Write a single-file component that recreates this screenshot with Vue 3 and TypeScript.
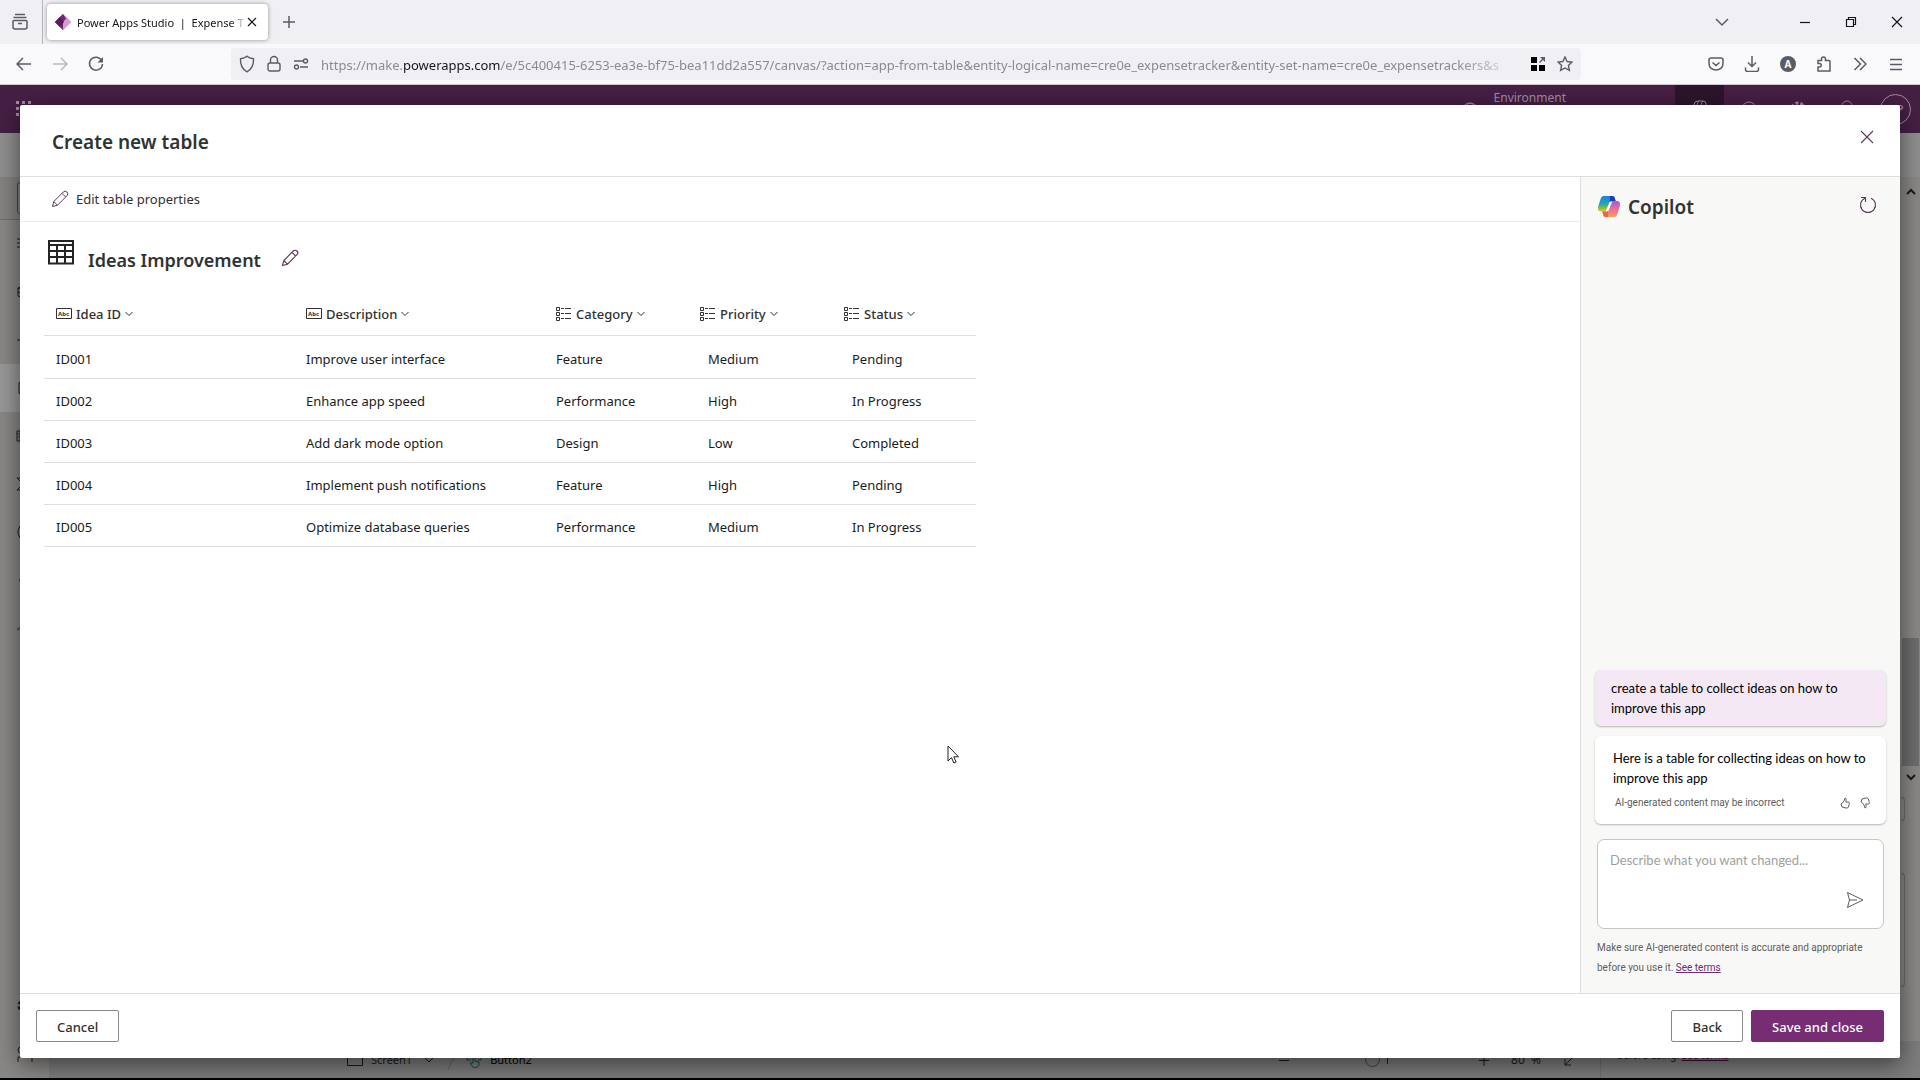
<script setup lang="ts">
import { ref } from 'vue'

interface Column { key: string; label: string; kind: 'text' | 'choice' }
interface Idea { id: string; description: string; category: string; priority: string; status: string }

const columns: Column[] = [
  { key: 'id', label: 'Idea ID', kind: 'text' },
  { key: 'description', label: 'Description', kind: 'text' },
  { key: 'category', label: 'Category', kind: 'choice' },
  { key: 'priority', label: 'Priority', kind: 'choice' },
  { key: 'status', label: 'Status', kind: 'choice' },
]

const ideas: Idea[] = [
  { id: 'ID001', description: 'Improve user interface', category: 'Feature', priority: 'Medium', status: 'Pending' },
  { id: 'ID002', description: 'Enhance app speed', category: 'Performance', priority: 'High', status: 'In Progress' },
  { id: 'ID003', description: 'Add dark mode option', category: 'Design', priority: 'Low', status: 'Completed' },
  { id: 'ID004', description: 'Implement push notifications', category: 'Feature', priority: 'High', status: 'Pending' },
  { id: 'ID005', description: 'Optimize database queries', category: 'Performance', priority: 'Medium', status: 'In Progress' },
]

const railIcons: string[] = [
  'M1 4h16M1 8h16M1 12h16',
  'M9 2l7 3-7 3-7-3zM2 9l7 3 7-3M2 13l7 3 7-3M2 5v8',
  'M9 2v14M1 9h16',
  'M3 4c0-3 12-3 12 0v10c0 3-12 3-12 0z',
  'M1 4h16v10H1zM4 4v10M8 7h5M8 11h5M2 7h1M2 10h1',
  'M15 3H1l6 6-6 6h14',
  'M5 2c-4 5-4 9 0 14M13 2c4 5 4 9 0 14M6 6l6 6M12 6l-6 6',
  'M4 8v3',
  'M1 11l6-5 8 6',
]

const prompt = ref('')
</script>

<template>
  <div class="window">
    <header class="tabs">
      <button class="icon-btn recent" aria-label="Recent browsing">
        <svg width="18" height="18" viewBox="0 0 18 18"><path d="M4 1.500h10M2.500 4.500h13M3 7.500h12a1 1 0 0 1 1 1V14a2 2 0 0 1-2 2H4a2 2 0 0 1-2-2V8.500a1 1 0 0 1 1-1zM7 10.500h4" /></svg>
      </button>
      <div class="tab">
        <svg class="logo" width="16" height="16" viewBox="0 0 16 16"><path d="M8 0l8 8-8 8-8-8z" fill="#b96bb4" /><path d="M8 0l3 5-3 3 3 3-3 5-8-8z" fill="#742774" /><path d="M8 0l4 4-4 4V16l8-8z" fill="#d59bd2" /><path d="M5 3l4 5-4 5-5-5z" fill="#5c1d5e" /></svg>
        <span class="tab-title">Power Apps Studio&nbsp; |&nbsp; Expense T</span>
        <button class="icon-btn dark" aria-label="Close tab"><svg width="10" height="10" viewBox="0 0 10 10"><path d="M1 1l8 8M9 1L1 9" /></svg></button>
      </div>
      <button class="icon-btn new-tab" aria-label="New tab"><svg width="14" height="14" viewBox="0 0 14 14"><path d="M7 1v12M1 7h12" /></svg></button>
      <div class="window-controls">
        <button class="icon-btn" aria-label="List tabs"><svg width="14" height="14" viewBox="0 0 14 14"><path d="M1 4l6 6 6-6" /></svg></button>
        <button class="icon-btn dark minimize" aria-label="Minimize"><svg width="12" height="12" viewBox="0 0 12 12"><path d="M1 6.500h10" /></svg></button>
        <button class="icon-btn dark" aria-label="Restore"><svg width="12" height="12" viewBox="0 0 12 12"><path d="M1.500 3.500h7v7h-7zM3.500 3.500v-2h7v7h-2" /></svg></button>
        <button class="icon-btn dark" aria-label="Close"><svg width="12" height="12" viewBox="0 0 12 12"><path d="M1 1l10 10M11 1L1 11" /></svg></button>
      </div>
    </header>

    <nav class="toolbar">
      <div class="nav-buttons">
        <button class="icon-btn" aria-label="Back"><svg width="16" height="16" viewBox="0 0 16 16"><path d="M15 8H1.500M7 2L1 8l6 6" /></svg></button>
        <button class="icon-btn faded" aria-label="Forward"><svg width="16" height="16" viewBox="0 0 16 16"><path d="M1 8h13.500M9 2l6 6-6 6" /></svg></button>
        <button class="icon-btn" aria-label="Reload"><svg width="16" height="16" viewBox="0 0 16 16"><path d="M13.700 4.500A6.500 6.500 0 1 0 14.500 8" /><path d="M15 1v5.500H9.500z" fill="currentColor" stroke="none" /></svg></button>
      </div>
      <div class="address">
        <svg width="16" height="18" viewBox="0 0 16 18"><path d="M8 1.200C6 3 4 3.500 1.500 3.700 1.200 9 3 14 8 16.800c5-2.800 6.800-7.800 6.500-13.100C12 3.500 10 3 8 1.200z" /></svg>
        <svg width="14" height="18" viewBox="0 0 14 18"><path d="M3 8h8a2 2 0 0 1 2 2v4a2 2 0 0 1-2 2H3a2 2 0 0 1-2-2v-4a2 2 0 0 1 2-2zM3.500 8V5a3.500 3.500 0 0 1 7 0v3" /></svg>
        <svg width="16" height="14" viewBox="0 0 16 14"><path d="M1 4h9M7 10h8" /><circle cx="12.500" cy="4" r="2" /><circle cx="3.500" cy="10" r="2" /></svg>
        <p class="url">https://make.<b>powerapps.com</b>/e/5c400415-6253-ea3e-bf75-bea11dd2a557/canvas/?action=app-from-table&amp;entity-logical-name=cre0e_expensetracker&amp;entity-set-name=cre0e_expensetrackers&amp;s</p>
        <svg class="solid" width="14" height="14" viewBox="0 0 14 14"><path d="M0 0h6v6H0zM0 8h6v6H0zM8 8h6v6H8z" /><path d="M9 0h5v5l-2-2-3 3-1-1 3-3z" fill="#5b5b66" /></svg>
        <svg width="16" height="16" viewBox="0 0 16 16"><path d="M8 1l2.100 4.500 4.900.6-3.600 3.400 1 4.900L8 12l-4.400 2.400 1-4.900L1 6.100l4.900-.6z" /></svg>
      </div>
      <div class="extensions">
        <button class="icon-btn" aria-label="Pocket"><svg width="16" height="16" viewBox="0 0 16 16"><path d="M3 2h10a2 2 0 0 1 2 2v3.500c0 8.700-14 8.700-14 0V4a2 2 0 0 1 2-2zM4.500 6.500L8 9.500l3.500-3" /></svg></button>
        <button class="icon-btn" aria-label="Downloads"><svg width="16" height="16" viewBox="0 0 16 16"><path d="M8 0v10.500M4 6.500l4 4 4-4M1.500 11.500v2a2 2 0 0 0 2 2h9a2 2 0 0 0 2-2v-2" /></svg></button>
        <button class="account" aria-label="Account">A</button>
        <button class="icon-btn" aria-label="Extensions"><svg width="16" height="16" viewBox="0 0 16 16"><path d="M2 4.500h3.500V3a2 2 0 0 1 4 0v1.500H13a1 1 0 0 1 1 1V15H2v-4h1.500a1.500 1.500 0 0 0 0-3.500H2z" /></svg></button>
        <button class="icon-btn" aria-label="More tools"><svg width="14" height="14" viewBox="0 0 14 14"><path d="M1.500 1l6 6-6 6M7 1l6 6-6 6" /></svg></button>
        <button class="icon-btn" aria-label="Menu"><svg width="14" height="14" viewBox="0 0 14 14"><path d="M1 2.500h12M1 7.500h12M1 12.500h12" /></svg></button>
      </div>
    </nav>

    <div class="studio">
      <div class="suite">
        <svg class="waffle" width="16" height="16" viewBox="0 0 16 16"><path d="M0 0h3v3H0zM6 0h3v3H6zM12 0h3v3h-3zM0 6h3v3H0zM6 6h3v3H6zM12 6h3v3h-3zM0 12h3v3H0zM6 12h3v3H6zM12 12h3v3h-3z" /></svg>
        <div class="environment">
          <svg width="18" height="18" viewBox="0 0 18 18"><circle cx="9" cy="9" r="8" /><ellipse cx="9" cy="9" rx="4" ry="8" /></svg>
          <span>Environment</span>
        </div>
        <div class="suite-cell active"><svg width="18" height="18" viewBox="0 0 18 18"><path d="M3 14V5a4 4 0 0 1 4-4h5a3 3 0 0 1 3 3v10M8 1C6 3 6 6 6 9M12 1c-2 2-2 5-2 8" /></svg></div>
        <div class="suite-cell"><svg width="18" height="18" viewBox="0 0 18 18"><circle cx="9" cy="9" r="7" /></svg></div>
        <div class="suite-cell"><svg width="18" height="18" viewBox="0 0 18 18"><circle cx="9" cy="9" r="6" stroke-width="3" stroke-dasharray="3 2" /></svg></div>
        <div class="suite-cell"><svg width="18" height="18" viewBox="0 0 18 18"><circle cx="9" cy="6" r="5" /></svg></div>
        <div class="suite-cell"><span class="avatar">AP</span></div>
      </div>
      <div class="command-strip"></div>
      <div class="formula-strip"><span class="property-box"></span></div>
      <div class="workspace">
        <ul class="rail">
          <li v-for="(icon, i) in railIcons" :key="i" :class="{ selected: i === 3 }">
            <svg width="18" height="18" viewBox="0 0 18 18"><path :d="icon" /></svg>
          </li>
          <li class="rail-end"><svg width="18" height="18" viewBox="0 0 18 18"><circle cx="9" cy="9" r="6" stroke-width="3" stroke-dasharray="3 2" /></svg></li>
          <li><svg width="18" height="18" viewBox="0 0 18 18"><circle cx="5" cy="5" r="3" /><path d="M2 17v-5h14v5" /></svg></li>
        </ul>
        <div class="scroll">
          <svg width="10" height="8" viewBox="0 0 10 8"><path d="M1 6l4-4 4 4" /></svg>
          <span class="thumb"></span>
          <svg class="scroll-down" width="10" height="8" viewBox="0 0 10 8"><path d="M1 2l4 4 4-4" /></svg>
          <span class="card-edge small"></span>
          <span class="card-edge"></span>
        </div>
      </div>
      <div class="status">
        <div class="crumbs">
          <svg width="16" height="12" viewBox="0 0 16 12"><path d="M.500.500h15v11H.500z" /></svg>
          <span>Screen1</span>
          <svg class="crumb-chevron" width="10" height="6" viewBox="0 0 10 6"><path d="M1 1l4 4 4-4" /></svg>
          <svg width="12" height="20" viewBox="0 0 12 20"><path class="soft" d="M11 0L2 20" /></svg>
          <svg class="teal" width="16" height="18" viewBox="0 0 16 18"><path d="M5 9H1V3h14v6h-3M7 12V6a1 1 0 0 1 2 0v4l4 1v3a4 4 0 0 1-7 1l-2-3z" /></svg>
          <span class="current">Button2</span>
        </div>
        <div class="zoom">
          <svg width="12" height="12" viewBox="0 0 12 12"><path d="M1 6.500h10" /></svg>
          <div class="track"><span class="knob"></span><span class="tick"></span></div>
          <svg width="12" height="12" viewBox="0 0 12 12"><path d="M1 6.500h10M6 1v11" /></svg>
          <span class="percent">80 &nbsp;%</span>
          <svg width="12" height="12" viewBox="0 0 12 12"><path d="M11 1L1 11M1 5v6h6" /></svg>
        </div>
        <div class="status-terms">before using. <span>See terms</span></div>
      </div>

      <div class="overlay">
        <section class="dialog" role="dialog" aria-labelledby="dialog-title">
          <header class="dialog-head">
            <h1 id="dialog-title">Create new table</h1>
            <button class="icon-btn plum" aria-label="Close dialog"><svg width="14" height="14" viewBox="0 0 14 14"><path d="M1 1l12 12M13 1L1 13" /></svg></button>
          </header>
          <div class="dialog-body">
            <main class="editor">
              <div class="commands">
                <button class="command">
                  <svg width="18" height="18" viewBox="0 0 18 18"><path d="M1.500 16.500l1.300-5L12.300 2a2.200 2.200 0 0 1 3.700 3.700L6.500 15.200zM2.800 11.500l3.700 3.700M11 3.300L14.700 7" /></svg>
                  Edit table properties
                </button>
              </div>
              <div class="table-title">
                <svg class="grid-icon" width="26" height="25" viewBox="0 0 26 25"><path d="M1 1h24v22.500H1zM1 5h24M1 11h24M1 17h24M9 5v18.500M17 5v18.500" /></svg>
                <h2>Ideas Improvement</h2>
                <button class="icon-btn plum" aria-label="Rename table"><svg width="18" height="18" viewBox="0 0 18 18"><path d="M1.500 16.500l1.300-5L12.300 2a2.200 2.200 0 0 1 3.700 3.700L6.500 15.200zM2.800 11.500l3.700 3.700M11 3.300L14.700 7" /></svg></button>
              </div>
              <table class="ideas">
                <thead>
                  <tr>
                    <th v-for="c in columns" :key="c.key" :class="c.kind" scope="col">
                      <button class="col-btn">
                        <svg v-if="c.kind === 'text'" width="16" height="12" viewBox="0 0 16 12"><path d="M.500.500h15v10H.500z" /><text x="2" y="8">Abc</text></svg>
                        <svg v-else width="16" height="15" viewBox="0 0 16 15"><path d="M.500.500h3v3h-3zM.500 5.500h3v3h-3zM.500 10.500h3v3h-3zM5 1.500h3M9 1.500h6M5 6.500h3M9 6.500h6M5 11.500h3M9 11.500h6" /></svg>
                        {{ c.label }}
                        <svg class="chev" width="8" height="6" viewBox="0 0 8 6"><path d="M.500 1L4 4.500 7.500 1" /></svg>
                      </button>
                    </th>
                  </tr>
                </thead>
                <tbody>
                  <tr v-for="idea in ideas" :key="idea.id">
                    <td>{{ idea.id }}</td>
                    <td>{{ idea.description }}</td>
                    <td>{{ idea.category }}</td>
                    <td class="inset">{{ idea.priority }}</td>
                    <td class="inset">{{ idea.status }}</td>
                  </tr>
                </tbody>
              </table>
            </main>

            <aside class="copilot">
              <header class="copilot-head">
                <svg class="copilot-logo" width="22" height="21" viewBox="0 0 22 21">
                  <defs>
                    <linearGradient id="cool" x1="0" y1="0" x2="0" y2="1"><stop offset="0" stop-color="#1a7fe0" /><stop offset=".5" stop-color="#21a6b4" /><stop offset=".75" stop-color="#7fbb45" /><stop offset="1" stop-color="#f2c31d" /></linearGradient>
                    <linearGradient id="warm" x1="0" y1="0" x2="0" y2="1"><stop offset="0" stop-color="#a25be0" /><stop offset=".5" stop-color="#ee6b9c" /><stop offset="1" stop-color="#fb9a56" /></linearGradient>
                  </defs>
                  <path d="M6 0h8c2 0 2.500 1 3 3l.6 2H14c-2 0-2.600 1-3 3L9.500 13c-.5 2-1 2.500-3 2.500H3C0 15.500-.500 13 .300 10L2.600 3C3.300 1 4 0 6 0z" fill="url(#cool)" />
                  <path d="M16 21H8c-2 0-2.500-1-3-3l-.6-2.500H7c2 0 2.600-1 3-3L12 8c.6-2 1-3 3-3h4c3 0 3.500 2.500 2.700 5.500L19.400 18c-.7 2-1.400 3-3.400 3z" fill="url(#warm)" />
                  <path d="M12 0h2c2 0 2.500 1 3 3l.6 2H14c-1 0-1.700.2-2.200 1z" fill="#1b3fae" />
                  <path d="M10 21H8c-2 0-2.500-1-3-3l-.6-2.500H8c1 0 1.500-.3 2-1z" fill="#e8693d" />
                  <path d="M11.500 6.500L14 6l-3.500 9-3 .500z" fill="#fff" />
                </svg>
                <h2>Copilot</h2>
                <button class="icon-btn plum" aria-label="Start over"><svg width="18" height="18" viewBox="0 0 18 18"><path d="M12 2.200A7.500 7.500 0 1 1 6 2.200M2 1.500h4.500V6" /></svg></button>
              </header>
              <div class="chat">
                <p class="bubble mine">create a table to collect ideas on how to improve this app</p>
                <div class="bubble reply">
                  <p>Here is a table for collecting ideas on how to improve this app</p>
                  <div class="feedback">
                    <span>AI-generated content may be incorrect</span>
                    <button class="icon-btn" aria-label="Like"><svg width="10" height="12" viewBox="0 0 10 12"><path d="M5 1c1.500 0 1.200 2 .8 4H8.500c1.300 0 .8 2 .2 4-.4 1.500-1.200 2.300-2.700 2L2 10 1 7c1.500-.500 3.500-3 4-6z" /></svg></button>
                    <button class="icon-btn" aria-label="Dislike"><svg width="10" height="12" viewBox="0 0 10 12"><path d="M5 11c1.500 0 1.200-2 .8-4H8.500c1.300 0 .8-2 .2-4-.4-1.500-1.200-2.300-2.700-2L2 2 1 5c1.500.500 3.500 3 4 6z" /></svg></button>
                  </div>
                </div>
                <div class="composer">
                  <textarea v-model="prompt" aria-label="Message Copilot" placeholder="Describe what you want changed..."></textarea>
                  <button class="icon-btn send" aria-label="Send"><svg width="18" height="18" viewBox="0 0 18 18"><path d="M1.500 1.500L17 9 1.500 16.500 3.500 9zM3.500 9H11" /></svg></button>
                </div>
                <p class="disclaimer">Make sure AI-generated content is accurate and appropriate before you use it. <a href="#terms">See terms</a></p>
              </div>
            </aside>
          </div>
          <footer class="dialog-foot">
            <button class="btn cancel">Cancel</button>
            <button class="btn">Back</button>
            <button class="btn primary">Save and close</button>
          </footer>
        </section>
      </div>
      <svg class="pointer" width="12" height="19" viewBox="0 0 12 19"><path d="M1 1v15l3.500-3.300 2.300 5.300 2.300-1-2.300-5.200H11.500z" fill="#fff" stroke="#222" /></svg>
    </div>
  </div>
</template>

<style>
body { margin: 0; background: #000; }
</style>

<style scoped>
* { box-sizing: border-box; }
h1, h2, p, ul { margin: 0; padding: 0; }
svg { flex: none; fill: none; stroke: currentColor; }
button { font: inherit; color: inherit; cursor: pointer; }

.window {
  display: flex;
  flex-direction: column;
  min-height: 100vh;
  padding-bottom: 2px;
  font: 13px/20px "Noto Sans", "Open Sans", sans-serif;
  color: #201f1e;
}
.icon-btn {
  display: flex;
  align-items: center;
  justify-content: center;
  flex: none;
  padding: 0;
  border: 0;
  background: none;
  color: #5b5b66;
}
.icon-btn svg { stroke-width: 1.5; }
.icon-btn.dark { color: #15141a; }
.icon-btn.dark svg { stroke-width: 1.2; }
.icon-btn.plum { color: #5b3a5c; }
.icon-btn.plum svg { stroke-width: 1.1; }
.icon-btn.faded { color: #b9b9c0; }

/* browser chrome */
.tabs { display: flex; height: 44px; background: #f0f0f4; }
.recent { width: 43px; padding-right: 2px; border-right: 1px solid #b4b4ba; }
.tab {
  display: flex;
  align-items: center;
  width: 221px;
  margin: 4px;
  padding: 0 11px 0 8px;
  border-radius: 4px;
  background: #fff;
  box-shadow: 0 0 4px #0006;
}
.logo, .copilot-logo { stroke: none; }
.tab-title {
  flex: 1;
  overflow: hidden;
  margin-left: 6px;
  padding-top: 2px;
  font-size: 11px;
  white-space: nowrap;
  color: #15141a;
  mask-image: linear-gradient(to right, #000 90%, transparent);
}
.new-tab { width: 34px; }
.window-controls { display: flex; align-items: center; margin-left: auto; }
.window-controls .icon-btn { width: 46px; height: 44px; }
.window-controls .minimize { margin-left: 37px; }
.toolbar {
  display: flex;
  align-items: center;
  height: 41px;
  padding-right: 6px;
  border-bottom: 1px solid #ccccd0;
  background: #f9f9fb;
}
.nav-buttons { display: flex; padding-left: 6px; width: 231px; }
.nav-buttons .icon-btn, .extensions > * { width: 36px; height: 32px; }
.address {
  display: flex;
  flex: 1;
  align-items: center;
  gap: 12px;
  min-width: 0;
  height: 32px;
  padding: 0 8px;
  border-radius: 4px;
  background: #f0f0f4;
  color: #5b5b66;
}
.address svg { stroke-width: 1.4; }
.address .solid { fill: #000; stroke: none; }
.url {
  flex: 1;
  overflow: hidden;
  padding-top: 2px;
  white-space: nowrap;
  color: #8a8a92;
  mask-image: linear-gradient(to right, #000 95%, transparent);
}
.url b { font-weight: 400; color: #15141a; }
.extensions { display: flex; align-items: center; margin-left: 117px; }
.extensions .account {
  width: 16px;
  height: 16px;
  margin: 0 10px;
  padding: 0;
  border: 0;
  border-radius: 50%;
  background: #5b5b66;
  font-size: 10px;
  font-weight: 700;
  line-height: 16px;
  color: #fff;
}

/* dimmed studio behind the dialog */
.studio {
  position: relative;
  display: flex;
  flex: 1;
  flex-direction: column;
  background: #8a8886;
  color: #1b1b1b;
}
.suite { display: flex; height: 48px; background: #461f45; color: #a48ea4; }
.waffle { margin: 16px; fill: #a48ea4; stroke: none; }
.environment { display: flex; gap: 15px; margin-left: auto; padding: 3px 109px 0 0; font-size: 12px; }
.environment svg { margin-top: 14px; }
.suite-cell { display: flex; align-items: center; justify-content: center; width: 49px; }
.suite-cell.active { background: #2c152b; }
.avatar {
  width: 31px;
  height: 31px;
  border: 1px solid;
  border-radius: 50%;
  line-height: 29px;
  text-align: center;
}
.command-strip { height: 44px; background: #8f8f8f; }
.formula-strip { width: 49px; height: 43px; padding: 5px 0 0 17px; border-bottom: 1px solid #6d6d6d; background: #858381; }
.property-box { display: block; height: 32px; border: 1px solid #444; border-radius: 3px; }
.workspace { display: flex; flex: 1; justify-content: space-between; }
.rail { display: flex; flex-direction: column; width: 50px; margin-bottom: -37px; list-style: none; }
.rail li { display: flex; align-items: center; justify-content: center; height: 48px; }
.rail li.selected { background: #999; }
.rail .rail-end { margin-top: auto; }
.scroll { display: flex; flex-direction: column; align-items: center; width: 19px; padding-top: 24px; }
.scroll svg { stroke-width: 2; }
.scroll > svg:first-child { margin-top: -56px; }
.thumb { width: 17px; height: 128px; margin-top: 442px; background: #6d6d6d; }
.scroll-down { margin-top: 7px; }
.card-edge {
  align-self: flex-start;
  width: 4px;
  height: 114px;
  margin-top: 52px;
  border: 1px solid #6a6a6a;
  border-left: 0;
  border-radius: 0 4px 4px 0;
}
.card-edge.small { height: 24px; margin-top: 16px; }
.status { display: flex; align-items: center; height: 37px; margin-left: 49px; padding-left: 281px; background: #7d7d7d; }
.crumbs { display: flex; align-items: center; gap: 8px; padding-left: 17px; font-size: 11px; }
.crumb-chevron { margin: 0 4px; }
.soft { stroke: #666; }
.teal { color: #14494d; }
.current { color: #000; }
.zoom { display: flex; align-items: center; margin-left: auto; font-size: 12px; }
.track { display: flex; align-items: center; gap: 7px; width: 188px; padding-left: 75px; }
.knob { width: 15px; height: 15px; border: 1px solid #444; border-radius: 50%; }
.tick { width: 1px; height: 8px; background: #222; }
.percent { margin: 0 23px 0 21px; }
.status-terms {
  align-self: stretch;
  width: 320px;
  margin-left: 24px;
  padding: 4px 0 0 16px;
  border-left: 1px solid #6f6f6f;
  font-size: 10px;
}
.status-terms span { color: #3a0d3a; text-decoration: underline; }

/* dialog */
.overlay { position: absolute; inset: 0; display: flex; padding: 20px; }
.dialog {
  display: flex;
  flex: 1;
  flex-direction: column;
  min-width: 0;
  border-radius: 2px;
  background: #fff;
  box-shadow: 0 6px 24px #0008;
}
.dialog-head {
  display: flex;
  align-items: center;
  justify-content: space-between;
  height: 72px;
  padding: 0 26px 0 32px;
  border-bottom: 1px solid #e1dfdd;
}
.dialog-head .icon-btn { padding-bottom: 8px; }
h1, h2 { font-size: 19px; font-weight: 600; line-height: 28px; color: #2f3331; }
h1 { padding-top: 2px; }
.dialog-body { display: flex; flex: 1; }
.editor { flex: 1; min-width: 0; }
.commands { height: 45px; padding-left: 31px; border-bottom: 1px solid #edebe9; }
.command {
  display: flex;
  align-items: center;
  gap: 7px;
  height: 44px;
  padding: 0;
  border: 0;
  background: none;
  color: #323130;
}
.command svg { color: #5b3a5c; }
.table-title { display: flex; gap: 14px; padding: 18px 0 0 28px; }
.table-title h2 { margin: 6px 6px 0 0; font-size: 18px; }
.table-title .icon-btn { height: 36px; }
.grid-icon { stroke-width: 2; color: #252423; }
.ideas { margin: 18px 0 0 24px; border-collapse: collapse; table-layout: fixed; width: 932px; }
.ideas th { width: 250px; height: 41px; padding: 0 0 0 12px; border-bottom: 1px solid #e1dfdd; text-align: left; }
.ideas th.choice { width: 144px; }
.ideas td { height: 42px; padding: 4px 0 0 12px; border-bottom: 1px solid #e1dfdd; }
.ideas tr:first-child td { height: 43px; }
.ideas td.inset { padding-left: 20px; }
.col-btn {
  display: flex;
  align-items: center;
  gap: 4px;
  padding: 0;
  border: 0;
  background: none;
  font-weight: 500;
  color: #323130;
}
.col-btn text { fill: #323130; stroke: none; font-size: 6px; font-weight: 700; }

.copilot {
  display: flex;
  flex-direction: column;
  width: 320px;
  border-left: 1px solid #e1dfdd;
  background: #f8f8f7;
}
.copilot-head { display: flex; align-items: center; gap: 8px; padding: 16px 23px 0 17px; }
.copilot-head .icon-btn { margin-left: auto; padding-bottom: 4px; }
.copilot-logo { margin-bottom: 2px; }
.chat { margin-top: auto; padding: 0 14px 15px; font-family: Lato, "Noto Sans", sans-serif; }
.bubble { border-radius: 6px; box-shadow: 0 1px 2px #0004; color: #000; }
.mine { margin-bottom: 10px; padding: 8px 16px; background: #f4e8f5; }
.reply { margin-bottom: 15px; padding: 12px 16px 11px 18px; background: #fff; }
.feedback { display: flex; align-items: center; gap: 10px; padding: 5px 0 0 2px; font: 10px/20px Roboto, "Noto Sans", sans-serif; color: #605e5c; }
.feedback span { flex: 1; }
.feedback svg { stroke-width: 1; }
.composer {
  position: relative;
  margin: 0 2px 9px;
}
.composer textarea {
  display: block;
  width: 100%;
  height: 90px;
  padding: 10px 12px;
  border: 1px solid #c8c6c4;
  border-radius: 7px;
  background: #fff;
  font: inherit;
  resize: none;
}
.composer textarea::placeholder { color: #a19f9d; }
.send { position: absolute; right: 20px; bottom: 20px; }
.send svg { stroke-width: 1; }
.disclaimer { padding: 0 2px; font: 10px/20px Roboto, "Noto Sans", sans-serif; color: #605e5c; }
.disclaimer a { color: #742774; }

.dialog-foot {
  display: flex;
  gap: 8px;
  padding: 16px;
  border-top: 1px solid #e1dfdd;
}
.btn {
  height: 32px;
  padding: 2px 20px 0;
  border: 1px solid #8a8886;
  border-radius: 2px;
  background: #fff;
  font-weight: 500;
  color: #323130;
}
.btn.cancel { margin-right: auto; }
.btn.primary { border-color: #762d74; background: #762d74; color: #fff; }

.pointer { position: absolute; left: 947px; top: 660px; }
</style>
